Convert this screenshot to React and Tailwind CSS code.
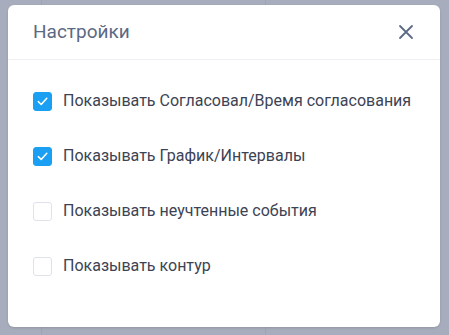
import { useState } from 'react';

const options = [
  { id: 'approve', label: 'Показывать Согласовал/Время согласования', checked: true },
  { id: 'schedule', label: 'Показывать График/Интервалы', checked: true },
  { id: 'events', label: 'Показывать неучтенные события', checked: false },
  { id: 'contour', label: 'Показывать контур', checked: false },
];

function Checkbox({ checked, onChange }) {
  return (
    <button
      type="button"
      onClick={onChange}
      className={`flex h-[19px] w-[19px] shrink-0 items-center justify-center rounded-[3px] border ${
        checked ? 'border-[#1a9ff2] bg-[#1a9ff2]' : 'border-[#dfe2ec] bg-white'
      }`}
    >
      {checked && (
        <svg width="13" height="13" viewBox="0 0 14 14" fill="none">
          <path d="M2.5 7.2 5.6 10.2 11.6 3.6" stroke="white" strokeWidth="1.7" strokeLinecap="round" strokeLinejoin="round" />
        </svg>
      )}
    </button>
  );
}

export default function App() {
  const [items, setItems] = useState(options);

  const toggle = (id) => {
    setItems(items.map((it) => (it.id === id ? { ...it, checked: !it.checked } : it)));
  };

  return (
    <div className="relative h-[335px] w-full overflow-hidden bg-[#a7adbc]" style={{ fontFamily: 'Roboto, "Noto Sans", sans-serif' }}>
      {/* страница под затемнением */}
      <div className="flex h-full w-full">
        <div className="w-[42px] border-r border-[#9ea4b3]" />
        <div className="w-[224px] border-r border-[#9ea4b3]" />
        <div className="flex-1" />
      </div>

      {/* модальное окно */}
      <div className="absolute left-2 top-[5px] flex h-[322px] w-[432px] flex-col rounded-[6px] bg-white shadow-sm">
        <div className="flex h-[55px] items-center justify-between border-b border-[#eef0f4] pl-[25px] pr-[26px]">
          <h2 className="text-[19px] text-[#5b6a84]">Настройки</h2>
          <button type="button" className="text-[#5b6a84]">
            <svg width="16" height="16" viewBox="0 0 16 16" fill="none">
              <path d="M2 2 14 14M14 2 2 14" stroke="currentColor" strokeWidth="1.8" strokeLinecap="round" />
            </svg>
          </button>
        </div>

        <div className="flex flex-col gap-[35px] pl-[25px] pt-[31px]">
          {items.map((it) => (
            <label key={it.id} className="flex h-[20px] items-center gap-[11px]">
              <Checkbox checked={it.checked} onChange={() => toggle(it.id)} />
              <span className="text-[16px] text-[#3c4354]">{it.label}</span>
            </label>
          ))}
        </div>
      </div>
    </div>
  );
}
